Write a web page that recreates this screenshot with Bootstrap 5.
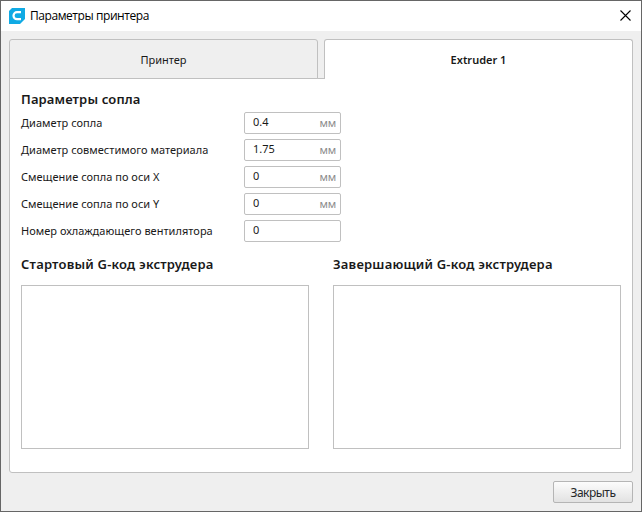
<!DOCTYPE html>
<html lang="ru">
<head>
<meta charset="utf-8">
<title>Параметры принтера</title>
<link href="https://cdn.jsdelivr.net/npm/bootstrap@5.3.0/dist/css/bootstrap.min.css" rel="stylesheet">
<style>
body{font-family:"Noto Sans","Open Sans",sans-serif;font-size:11px;line-height:16px;color:#191919;overflow:hidden}
.window{width:642px;height:512px;border:1px solid #666;background:#efefef}
.titlebar{height:30px;padding:0 10px 0 8px;background:#fff}
.titlebar svg{margin-bottom:1px}
.caption{font-family:"Open Sans",sans-serif;font-size:12px;color:#000;margin-left:5px;letter-spacing:-.43px}
.window-body{padding:8px 8px 0}
.tabs{gap:6px;height:40px;margin-bottom:-1px}
.tabs .nav-link{flex:1 1 0;height:40px;padding:0;border:1px solid #c0c0c0;border-radius:3px 3px 0 0;background:#efefef;color:#191919;font-size:11px;line-height:40px;position:relative}
.tabs .nav-link.active{background:#fff;border-bottom:0;font-weight:600}
.pane{height:395px;border:1px solid #c0c0c0;border-radius:0 0 3px 3px;background:#fff;padding:11px 11px 0}
.heading{font-size:13px;font-weight:600;line-height:18px;margin:0;letter-spacing:.2px}
.pane>.heading{letter-spacing:.13px}
.field{height:22px;margin-bottom:5px}
.field label{width:223px;letter-spacing:.02px}
.value-box{width:97px;height:22px;border:1px solid #c0c0c0;border-radius:2px;padding:0 4px 0 8px}
.value-box input{width:60px;height:17px;padding:0;border:0;background:none;color:#191919;outline:0;font-size:11px}
.unit{color:#8c8c8c;padding-top:2px;letter-spacing:-.2px}
.code-area{display:block;width:288px;height:164px;border:1px solid #c0c0c0;border-radius:0;resize:none;padding:4px;outline:0;margin-top:12px}
.close-dialog{width:80px;height:22px;padding:0;border:1px solid #b5b5b5;border-radius:2px;background:linear-gradient(#fcfcfc,#e2e2e2);color:#26282a;font-size:12px;line-height:22px;letter-spacing:-.5px;margin-top:8px}
</style>
<script src="https://cdn.jsdelivr.net/npm/bootstrap@5.3.0/dist/js/bootstrap.bundle.min.js"></script>
</head>
<body>
<div class="window">
  <header class="titlebar d-flex align-items-center">
    <svg width="16" height="16" viewBox="0 0 16 16"><path d="M3 0H16v11L11 16H0V3z" fill="#10aae4"/><path d="M12 4.2H8a3.5 3.5 0 0 0 0 7h4" fill="none" stroke="#fff" stroke-width="2.2"/></svg>
    <span class="caption">Параметры принтера</span>
    <svg class="ms-auto" width="11" height="11" viewBox="0 0 11 11"><path d="M.5.5l10 10M10.5.5l-10 10" stroke="#000" stroke-width="1.1"/></svg>
  </header>
  <main class="window-body">
    <nav class="nav tabs">
      <a class="nav-link text-center" href="#"><span>Принтер</span></a>
      <a class="nav-link text-center active" href="#"><span>Extruder 1</span></a>
    </nav>
    <section class="pane">
      <h2 class="heading mb-1">Параметры сопла</h2>
      <div class="fields">
        <div class="field d-flex align-items-center"><label for="f1">Диаметр сопла</label><div class="value-box d-flex justify-content-between"><input id="f1" value="0.4"><span class="unit">мм</span></div></div>
        <div class="field d-flex align-items-center"><label for="f2">Диаметр совместимого материала</label><div class="value-box d-flex justify-content-between"><input id="f2" value="1.75"><span class="unit">мм</span></div></div>
        <div class="field d-flex align-items-center"><label for="f3">Смещение сопла по оси X</label><div class="value-box d-flex justify-content-between"><input id="f3" value="0"><span class="unit">мм</span></div></div>
        <div class="field d-flex align-items-center"><label for="f4">Смещение сопла по оси Y</label><div class="value-box d-flex justify-content-between"><input id="f4" value="0"><span class="unit">мм</span></div></div>
        <div class="field d-flex align-items-center"><label for="f5">Номер охлаждающего вентилятора</label><div class="value-box d-flex"><input id="f5" value="0"></div></div>
      </div>
      <div class="d-flex justify-content-between pt-2">
        <div><h2 class="heading">Стартовый G-код экструдера</h2><textarea class="code-area" aria-label="Стартовый G-код"></textarea></div>
        <div><h2 class="heading">Завершающий G-код экструдера</h2><textarea class="code-area" aria-label="Завершающий G-код"></textarea></div>
      </div>
    </section>
    <div class="d-flex justify-content-end"><button class="btn close-dialog" type="button">Закрыть</button></div>
  </main>
</div>
</body>
</html>
